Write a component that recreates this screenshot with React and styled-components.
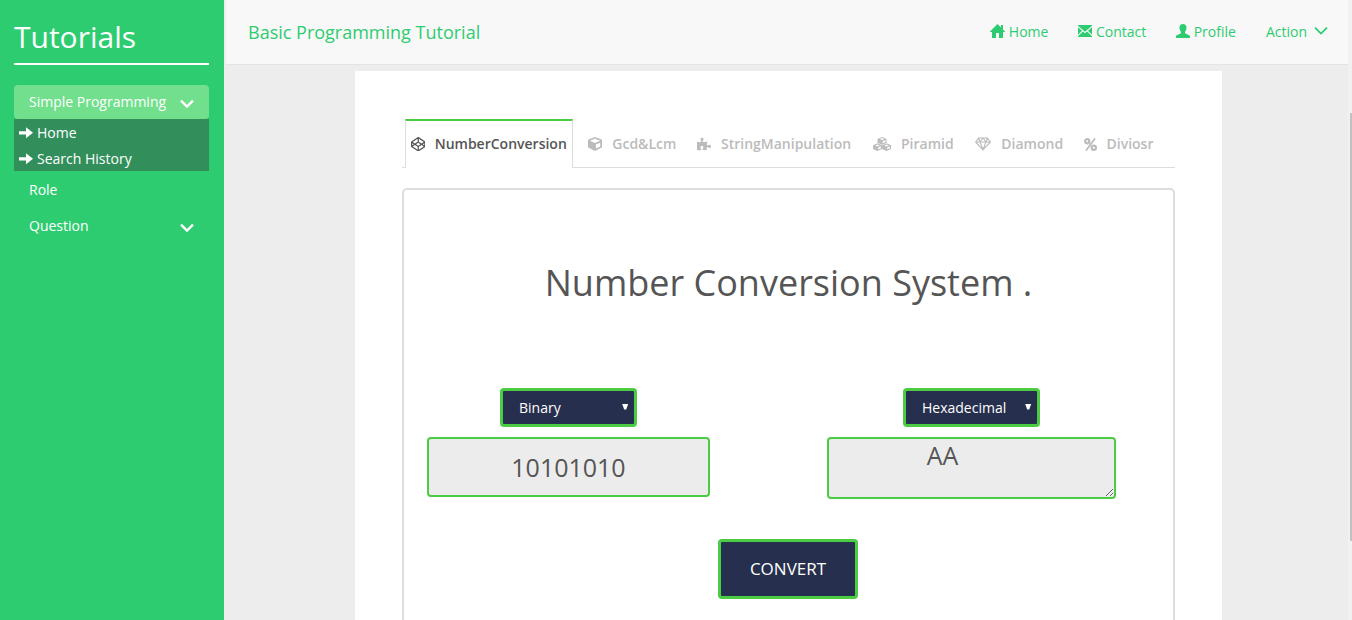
import React from "react";
import styled, { createGlobalStyle, css } from "styled-components";
import { FaCube, FaPuzzlePiece, FaCodepen } from "react-icons/fa";

const GlobalStyle = createGlobalStyle`
  *, *::before, *::after { box-sizing: border-box; }
  body {
    margin: 0;
    background: #ededed;
    font-family: "Open Sans", "Noto Sans", sans-serif;
    font-size: 14px;
    line-height: 20px;
    overflow: hidden;
  }
`;

const Page = styled.div`
  display: flex;
  width: 100%;
  height: 620px;
  overflow: hidden;
`;

const Sidebar = styled.aside`
  flex: 0 0 224px;
  padding: 15px 15px 0 14px;
  background: #2ecc71;
  color: #fff;
`;

const SidebarTitle = styled.h1`
  margin: 0 0 20px;
  height: 50px;
  border-bottom: 2px solid #fff;
  font-size: 30px;
  font-weight: 400;
  line-height: 43px;
`;

const MenuItem = styled.div`
  display: flex;
  align-items: center;
  justify-content: space-between;
  height: ${(p) => p.$height || 36}px;
  padding: 0 15px;
  font-weight: 400;
  ${(p) =>
    p.$active &&
    css`
      background: #71df8c;
      border-radius: 4px;
    `}
  svg { position: relative; top: 2px; }
`;

const SubMenu = styled.div`
  height: 52px;
  margin-bottom: 1px;
  padding: 1px 5px 0;
  background: #328f5b;
`;

const SubItem = styled.div`
  display: flex;
  align-items: center;
  gap: 4px;
  height: 26px;
`;

const Main = styled.main`
  flex: 1;
  min-width: 0;
`;

const Navbar = styled.header`
  display: flex;
  align-items: center;
  height: 65px;
  margin-left: 2px;
  padding: 0 20px 0 22px;
  background: #f8f8f8;
  border-bottom: 1px solid #e4e4e4;
  color: #2ecc71;
`;

const Brand = styled.div`
  flex: 1;
  font-size: 18px;
`;

const NavLinks = styled.nav`
  display: flex;
  align-items: center;
  gap: 30px;
`;

const NavLink = styled.a`
  display: flex;
  align-items: center;
  gap: ${(p) => p.$gap || 3.5}px;
  color: inherit;
  svg { display: block; margin-top: -2px; }
`;

const Card = styled.section`
  width: 867px;
  height: 560px;
  margin: 6px 0 0 131px;
  padding: 48px 47px 0;
  background: #fff;
`;

const Tabs = styled.div`
  display: flex;
  height: 49px;
  padding-left: 3px;
  border-bottom: 1px solid #ddd;
`;

const Tab = styled.div`
  display: flex;
  align-items: center;
  flex: 0 0 ${(p) => p.$width}px;
  height: 49px;
  padding: 0 0 1px ${(p) => p.$pad || 0}px;
  border-top: 2px solid ${(p) => (p.$active ? "#4ccc43" : "transparent")};
  color: #bbb;
  font-weight: 600;
  white-space: nowrap;
  ${(p) =>
    p.$active &&
    css`
      background: #fff;
      color: #555;
      border-left: 1px solid #ddd;
      border-right: 1px solid #ddd;
    `}
`;

const TabIcon = styled.span`
  display: flex;
  flex: 0 0 ${(p) => p.$width}px;
`;

const Panel = styled.div`
  height: 460px;
  margin-top: 20px;
  padding: 65px 23px 0;
  border: 2px solid #ddd;
  border-radius: 5px;
  text-align: center;
`;

const PanelTitle = styled.h2`
  margin: 0;
  height: 133px;
  color: #555;
  font-size: 36px;
  font-weight: 400;
  line-height: 56px;
  white-space: nowrap;
`;

const Fields = styled.div`
  display: flex;
  justify-content: space-between;
  margin-right: 34px;
`;

const Field = styled.div`
  display: flex;
  flex-direction: column;
  align-items: center;
  width: ${(p) => p.$width}px;
`;

const SelectBox = styled.div`
  display: flex;
  align-items: center;
  justify-content: space-between;
  width: 137px;
  height: 39px;
  margin: 0 0 10px;
  padding: 0 5px 0 16px;
  border: 3px solid #4ccc43;
  border-radius: 4px;
  background: #262f4d;
  color: #fff;
`;

const fieldBox = css`
  display: block;
  width: 100%;
  margin: 0;
  border: 2px solid #4ccc43;
  border-radius: 4px;
  outline: none;
  background: #ececec;
  color: #555;
  font-family: inherit;
  font-size: 25px;
  text-align: center;
`;

const NumberInput = styled.input`
  ${fieldBox}
  height: 60px;
  padding: 0;
`;

const ResultArea = styled.textarea`
  ${fieldBox}
  height: 62px;
  padding: 0 58px 0 0;
  line-height: 33px;
  overflow: hidden;
  resize: both;
`;

const ConvertButton = styled.button`
  display: block;
  width: 140px;
  height: 60px;
  margin: 40px 0 0 291px;
  padding: 0 0 2px;
  border: 3px solid #4ccc43;
  border-radius: 4px;
  background: #262f4d;
  color: #fff;
  font-family: inherit;
  font-size: 17px;
`;

const ScrollTrack = styled.div`
  flex: 0 0 4px;
  padding: 113px 0 0 2px;
  background: #f1f1f1;
`;

const ScrollThumb = styled.div`
  height: 428px;
  background: #c1c1c1;
`;

const Chevron = ({ thickness = 2.4 }) => (
  <svg width="14" height="10" viewBox="0 0 14 10" fill="none">
    <path d="M1 1.6 7 7.6 13 1.6" stroke="currentColor" strokeWidth={thickness} />
  </svg>
);

const ArrowRight = () => (
  <svg width="14" height="12" viewBox="0 0 14 12" fill="currentColor">
    <path d="M0 4.200h7V.2L14 5.700 7 11.200V7.400H0z" />
  </svg>
);

const HomeIcon = () => (
  <svg width="15" height="14" viewBox="0 0 15 14" fill="currentColor">
    <path d="M7.5 0 0 7.5v.6h2V14h4V9h3v5h4V8.1h2v-.6l-2-2V1h-2v2.5z" />
  </svg>
);

const MailIcon = () => (
  <svg width="14" height="12" viewBox="0 0 14 12" fill="currentColor">
    <path d="M0 0h14v.8L7 6.7 0 .8zM0 2.3l4 3.4-4 4zM14 2.3v7.4l-4-4zM4.9 6.5 7 8.3l2.1-1.8 4.9 4.8v.7H0v-.7z" />
  </svg>
);

const UserIcon = () => (
  <svg width="14" height="14" viewBox="0 0 14 14" fill="currentColor">
    <path d="M7 0c2.200 0 3.500 1.300 3.500 3.600 0 2-.7 3.500-1.500 4.400v1.300l4.300 2c.5.300.7.600.7 1.200V14H0v-1.500c0-.6.200-.9.700-1.200l4.300-2V8c-.8-.9-1.500-2.400-1.500-4.400C3.500 1.300 4.800 0 7 0z" />
  </svg>
);

const CubesIcon = () => (
  <svg width="18" height="14" viewBox="0 0 18 14" fill="currentColor">
    {[[4.5, 0], [0, 6.3], [9, 6.3]].map(([x, y]) => (
      <g key={`${x}-${y}`} transform={`translate(${x} ${y})`}>
        <path
          fillRule="evenodd"
          d="M4.500 0 9 1.900v3.900L4.500 7.700 0 5.800V1.900zM2.200 2.100l2.300 1 2.300-1-2.300-1zM5.200 4.200v2l2.700-1.200V3z"
        />
      </g>
    ))}
  </svg>
);

const DiamondIcon = () => (
  <svg width="16" height="14" viewBox="0 0 16 14" fill="none" stroke="currentColor" strokeWidth="1.1" strokeLinejoin="round">
    <path d="M3.600 1h8.800L15.400 5 8 12.800.6 5zM.6 5h14.800M5 5l3 7.600L11 5M3.700 1.200 5 5l3-4 3 4 1.300-3.800" />
  </svg>
);

const PercentIcon = () => (
  <svg width="13" height="13" viewBox="0 0 13 13" fill="none" stroke="currentColor">
    <circle cx="3.200" cy="3.300" r="2.100" strokeWidth="2.200" />
    <circle cx="9.800" cy="9.700" r="2.100" strokeWidth="2.200" />
    <path d="M11 .4 2 12.600" strokeWidth="1.700" />
  </svg>
);

const SelectCaret = () => (
  <svg width="7" height="9" viewBox="0 0 7 9" fill="currentColor">
    <path d="M.2 1h6L4.200 6.500h-2z" />
  </svg>
);

const TABS = [
  { label: "NumberConversion", icon: <FaCodepen size={14.5} />, width: 168, pad: 4.5, iconWidth: 24.2, active: true },
  { label: "Gcd&Lcm", icon: <FaCube size={14} />, width: 109, pad: 15, iconWidth: 24.3 },
  { label: "StringManipulation", icon: <FaPuzzlePiece size={14} />, width: 176, pad: 15, iconWidth: 24 },
  { label: "Piramid", icon: <CubesIcon />, width: 103, pad: 14.5, iconWidth: 28.5 },
  { label: "Diamond", icon: <DiamondIcon />, width: 109, pad: 14, iconWidth: 26.3 },
  { label: "Diviosr", icon: <PercentIcon />, width: 91, pad: 14, iconWidth: 22.5 },
];

export default function App() {
  return (
    <>
      <GlobalStyle />
      <Page>
        <Sidebar>
          <SidebarTitle>Tutorials</SidebarTitle>
          <MenuItem $active $height={34}>
            Simple Programming
            <Chevron />
          </MenuItem>
          <SubMenu>
            <SubItem><ArrowRight />Home</SubItem>
            <SubItem><ArrowRight />Search History</SubItem>
          </SubMenu>
          <MenuItem>Role</MenuItem>
          <MenuItem>
            Question
            <Chevron />
          </MenuItem>
        </Sidebar>
        <Main>
          <Navbar>
            <Brand>Basic Programming Tutorial</Brand>
            <NavLinks>
              <NavLink><HomeIcon />Home</NavLink>
              <NavLink><MailIcon />Contact</NavLink>
              <NavLink><UserIcon />Profile</NavLink>
              <NavLink $gap={7}>Action<Chevron thickness={1.8} /></NavLink>
            </NavLinks>
          </Navbar>
          <Card>
            <Tabs>
              {TABS.map((t) => (
                <Tab key={t.label} $active={t.active} $width={t.width} $pad={t.pad}>
                  <TabIcon $width={t.iconWidth}>{t.icon}</TabIcon>
                  {t.label}
                </Tab>
              ))}
            </Tabs>
            <Panel>
              <PanelTitle>Number Conversion System .</PanelTitle>
              <Fields>
                <Field $width={283}>
                  <SelectBox>Binary<SelectCaret /></SelectBox>
                  <NumberInput defaultValue="10101010" />
                </Field>
                <Field $width={289}>
                  <SelectBox>Hexadecimal<SelectCaret /></SelectBox>
                  <ResultArea defaultValue="AA" />
                </Field>
              </Fields>
              <ConvertButton>CONVERT</ConvertButton>
            </Panel>
          </Card>
        </Main>
        <ScrollTrack>
          <ScrollThumb />
        </ScrollTrack>
      </Page>
    </>
  );
}
